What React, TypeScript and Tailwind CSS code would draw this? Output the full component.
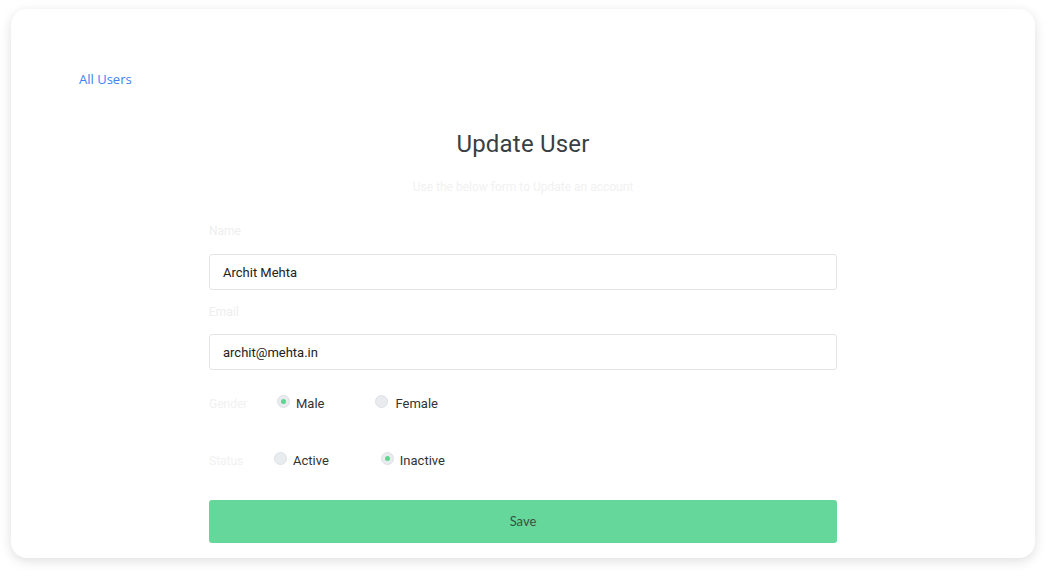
import React from 'react'
import { useState } from 'react'

function Radio({ checked, onClick }: { checked: boolean; onClick: () => void }) {
  return (
    <button
      type="button"
      onClick={onClick}
      className="w-[13px] h-[13px] rounded-full bg-[#e9ecef] border border-[#dde1e5] flex items-center justify-center -mt-[5px] shrink-0"
    >
      {checked && <span className="w-[5px] h-[5px] rounded-full bg-[#5fd491]" />}
    </button>
  )
}

function App() {
  const [gender, setGender] = useState('male')
  const [status, setStatus] = useState('inactive')

  return (
    <div className="w-[1052px] h-[579px] bg-white pt-[9px] pl-[11px] font-['Roboto',sans-serif] text-[#333]">
      <div className="w-[1024px] h-[549px] bg-white rounded-[16px] shadow-[0_3px_12px_rgba(0,0,0,0.13)] pt-[61px]">
        <div className="pl-[68px] leading-[18px]">
          <a href="#" className="text-[13px] leading-[18px] text-[#3b82f6] font-['Open_Sans',sans-serif]">All Users</a>
        </div>

        <div className="w-[628px] mx-auto">
          <h2 className="mt-[40px] text-center text-[24px] leading-[32px] text-[#3a3f44] tracking-[0.2px]">Update User</h2>
          <p className="mt-[19px] text-center text-[12px] leading-[16px] text-[#f1f1f1]">Use the below form to Update an account</p>

          <label className="block mt-[28px] text-[12px] leading-[16px] text-[#eeeeee]">Name</label>
          <input
            defaultValue="Archit Mehta"
            className="mt-[15px] w-full h-[36px] border border-[#e4e4e4] rounded-[3px] px-[13px] text-[13px] text-[#222] outline-none"
          />

          <label className="block mt-[14px] text-[12px] leading-[16px] text-[#eeeeee]">Email</label>
          <input
            defaultValue="archit@mehta.in"
            className="mt-[14px] w-full h-[36px] border border-[#e4e4e4] rounded-[3px] px-[13px] text-[13px] text-[#222] outline-none"
          />

          <div className="mt-[24px] flex items-center h-[20px] text-[13px]">
            <span className="text-[12px] text-[#f1f1f1] w-[68px]">Gender</span>
            <Radio checked={gender === 'male'} onClick={() => setGender('male')} />
            <span className="ml-[6px] text-[#333]">Male</span>
            <span className="ml-[51px]" />
            <Radio checked={gender === 'female'} onClick={() => setGender('female')} />
            <span className="ml-[7px] text-[#333]">Female</span>
          </div>

          <div className="mt-[37px] flex items-center h-[20px] text-[13px]">
            <span className="text-[12px] text-[#f1f1f1] w-[65px]">Status</span>
            <Radio checked={status === 'active'} onClick={() => setStatus('active')} />
            <span className="ml-[6px] text-[#333]">Active</span>
            <span className="ml-[52px]" />
            <Radio checked={status === 'inactive'} onClick={() => setStatus('inactive')} />
            <span className="ml-[6px] text-[#333]">Inactive</span>
          </div>

          <button className="mt-[29px] w-full h-[43px] bg-[#66d79a] rounded-[3px] text-[13px] text-[#35523f] font-['Lato',sans-serif]">
            Save
          </button>
        </div>
      </div>
    </div>
  )
}

export default App
